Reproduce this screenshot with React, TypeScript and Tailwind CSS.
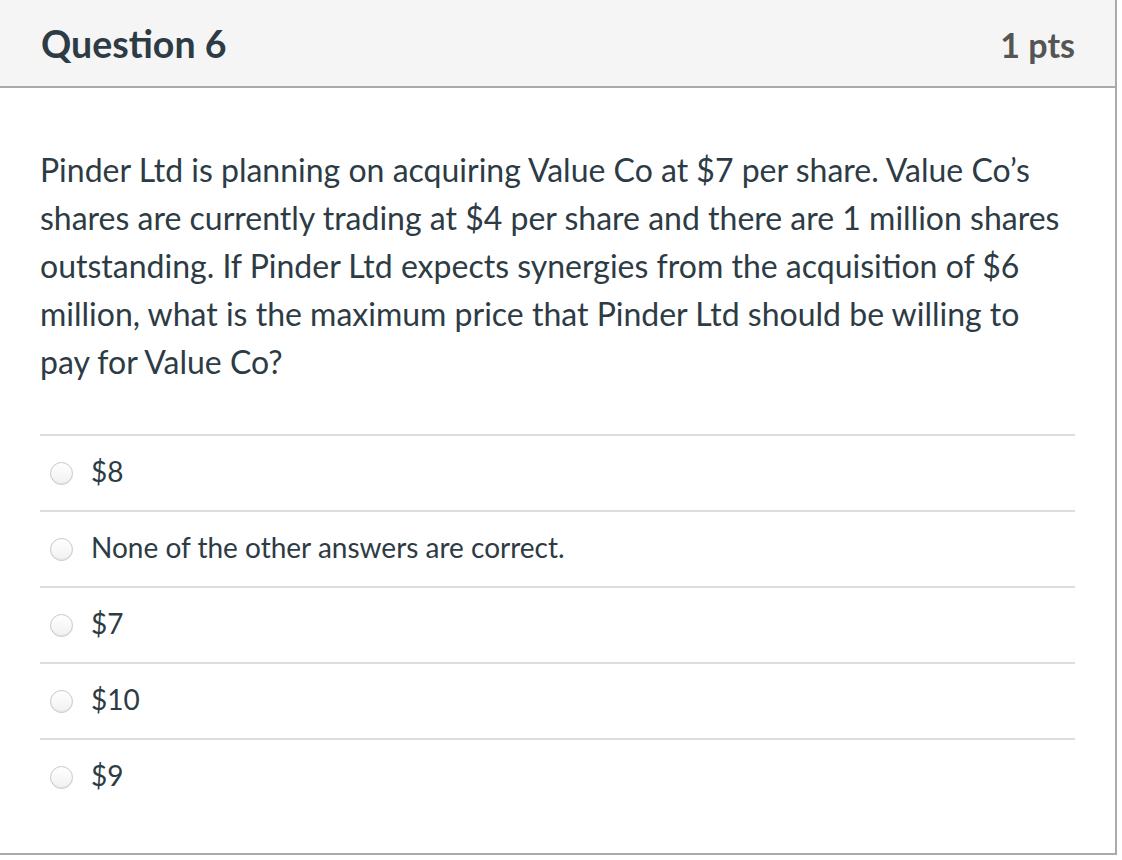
const ANSWERS = ['$8', 'None of the other answers are correct.', '$7', '$10', '$9']

function Radio() {
  return (
    <span className="block w-[23px] h-[23px] rounded-full border border-[#c8c8c8] bg-gradient-to-b from-white to-[#f1f1f1] shadow-[inset_0_-1px_1px_rgba(0,0,0,0.06)] shrink-0" />
  )
}

export default function App() {
  return (
    <div className="min-h-[860px] bg-white" style={{ fontFamily: 'Lato, "Noto Sans", sans-serif' }}>
      <div className="w-[1117px] h-[855px] border-r-2 border-b-2 border-[#aaaaaa] text-[#2d3b45]">
        {/* header */}
        <div className="h-[88px] bg-[#f5f5f5] border-b-2 border-[#aaaaaa] flex items-center justify-between pl-[41px] pr-[40px]">
          <h2 className="text-[37.5px] font-bold leading-none pt-[1px]">Question 6</h2>
          <span className="text-[34px] font-bold leading-none text-[#555555] pt-[3px]">1 pts</span>
        </div>

        {/* body */}
        <div className="pl-[40px] pr-[40px] pt-[58px]">
          <p className="text-[32px] leading-[48px]">
            Pinder Ltd is planning on acquiring Value Co at $7 per share. Value Co’s shares are currently trading at $4 per
            share and there are 1 million shares outstanding. If Pinder Ltd expects synergies from the acquisition of $6
            million, what is the maximum price that Pinder Ltd should be willing to pay for Value Co?
          </p>

          <div className="mt-[48px]">
            {ANSWERS.map(a => (
              <div key={a} className="h-[76px] border-t-2 border-[#dddddd] flex items-center pl-[10px] gap-[18px]">
                <Radio />
                <span className="text-[28px] leading-none pb-[4px]">{a}</span>
              </div>
            ))}
          </div>
        </div>
      </div>
    </div>
  )
}
